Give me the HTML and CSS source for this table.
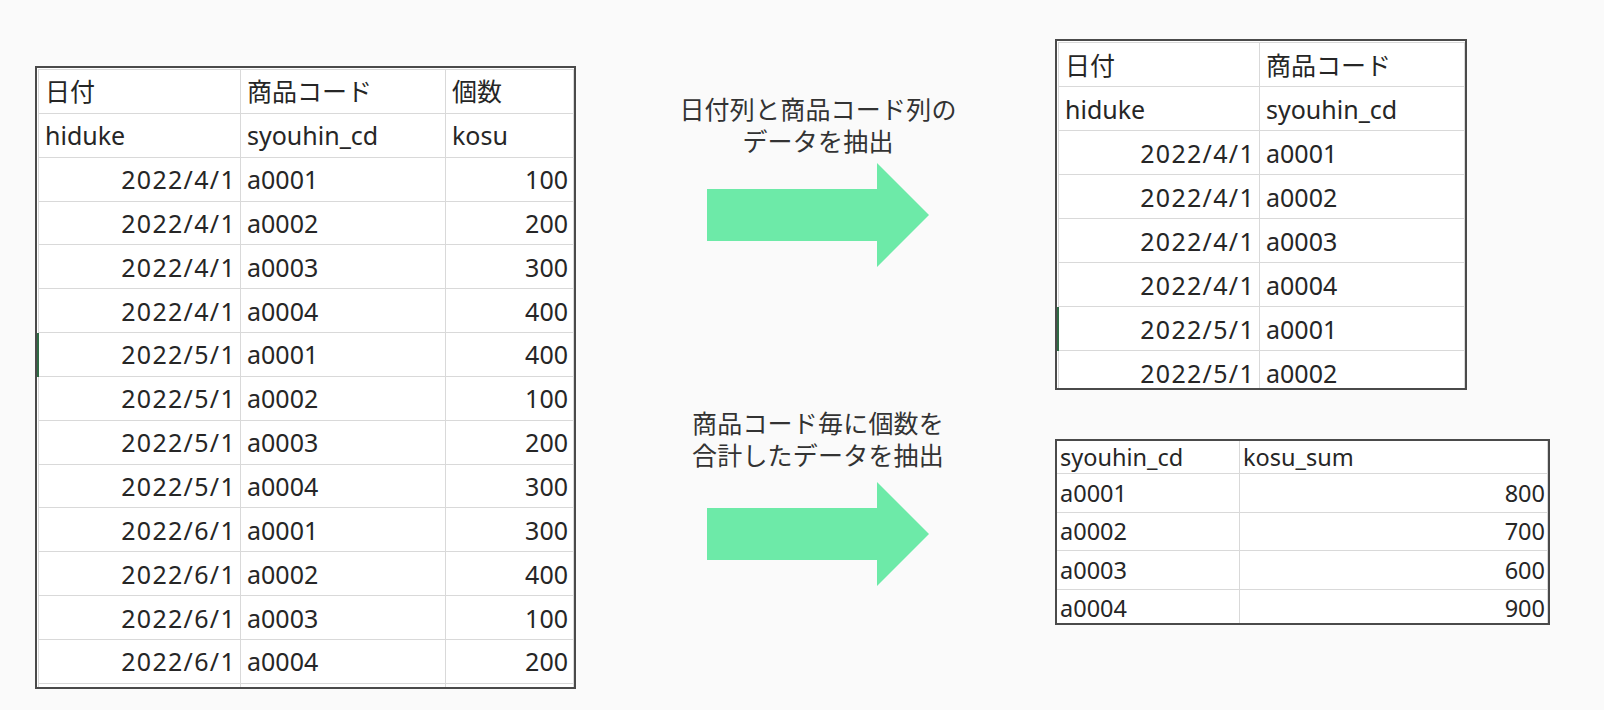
FILE: index.html
```html
<!DOCTYPE html>
<html lang="ja">
<head>
<meta charset="utf-8">
<title>抽出イメージ</title>
<link rel="stylesheet" href="styles.css">
</head>
<body>
<div class="page">
  <div class="sheet sheet-main">
    <div class="grid grid-3">
      <div class="c">日付</div><div class="c">商品コード</div><div class="c">個数</div>
      <div class="c">hiduke</div><div class="c">syouhin_cd</div><div class="c">kosu</div>
      <div class="c r d">2022/4/1</div><div class="c">a0001</div><div class="c r">100</div>
      <div class="c r d">2022/4/1</div><div class="c">a0002</div><div class="c r">200</div>
      <div class="c r d">2022/4/1</div><div class="c">a0003</div><div class="c r">300</div>
      <div class="c r d">2022/4/1</div><div class="c">a0004</div><div class="c r">400</div>
      <div class="c r d mark">2022/5/1</div><div class="c">a0001</div><div class="c r">400</div>
      <div class="c r d">2022/5/1</div><div class="c">a0002</div><div class="c r">100</div>
      <div class="c r d">2022/5/1</div><div class="c">a0003</div><div class="c r">200</div>
      <div class="c r d">2022/5/1</div><div class="c">a0004</div><div class="c r">300</div>
      <div class="c r d">2022/6/1</div><div class="c">a0001</div><div class="c r">300</div>
      <div class="c r d">2022/6/1</div><div class="c">a0002</div><div class="c r">400</div>
      <div class="c r d">2022/6/1</div><div class="c">a0003</div><div class="c r">100</div>
      <div class="c r d">2022/6/1</div><div class="c">a0004</div><div class="c r">200</div>
      <div class="c"></div><div class="c"></div><div class="c"></div>
    </div>
  </div>

  <div class="mid">
    <div class="step step-1">
      <p class="caption">日付列と商品コード列の<br>データを抽出</p>
      <svg class="arrow" width="222" height="104" viewBox="0 0 222 104" aria-hidden="true">
        <polygon points="0,26 170,26 170,0 222,52 170,104 170,78 0,78" fill="#6deaa8"/>
      </svg>
    </div>
    <div class="step step-2">
      <p class="caption">商品コード毎に個数を<br>合計したデータを抽出</p>
      <svg class="arrow" width="222" height="104" viewBox="0 0 222 104" aria-hidden="true">
        <polygon points="0,26 170,26 170,0 222,52 170,104 170,78 0,78" fill="#6deaa8"/>
      </svg>
    </div>
  </div>

  <div class="right">
    <div class="sheet sheet-top">
      <div class="grid grid-2">
        <div class="c">日付</div><div class="c">商品コード</div>
        <div class="c">hiduke</div><div class="c">syouhin_cd</div>
        <div class="c r d">2022/4/1</div><div class="c">a0001</div>
        <div class="c r d">2022/4/1</div><div class="c">a0002</div>
        <div class="c r d">2022/4/1</div><div class="c">a0003</div>
        <div class="c r d">2022/4/1</div><div class="c">a0004</div>
        <div class="c r d mark">2022/5/1</div><div class="c">a0001</div>
        <div class="c r d">2022/5/1</div><div class="c">a0002</div>
      </div>
    </div>

    <div class="sheet sheet-sum">
      <div class="grid grid-sum">
        <div class="s h">syouhin_cd</div><div class="s h">kosu_sum</div>
        <div class="s">a0001</div><div class="s r">800</div>
        <div class="s">a0002</div><div class="s r">700</div>
        <div class="s">a0003</div><div class="s r">600</div>
        <div class="s">a0004</div><div class="s r">900</div>
      </div>
    </div>
  </div>
</div>
</body>
</html>
```

FILE: styles.css
```css
html, body {
  margin: 0;
  padding: 0;
  background: #fafafa;
}

body {
  font-family: "Noto Sans", "Noto Sans CJK JP", sans-serif;
  color: #262626;
}

.page {
  display: flex;
  align-items: flex-start;
  padding-left: 35px;
}

/* ---------- sheets ---------- */
.sheet {
  background: #ffffff;
  border: 2px solid #4a4a4a;
  overflow: hidden;
  box-sizing: border-box;
}

.sheet-main {
  margin-top: 66px;
  height: 623px;
  padding: 1px 0 0 1px;
}

.sheet-top {
  height: 351px;
  padding: 1px 0 0 1px;
}

.sheet-sum {
  margin-top: 49px;
  height: 186px;
}

.grid {
  display: grid;
}

.grid-3 {
  grid-template-columns: 202px 205px 128px;
  border-left: 1px solid #d9d9d9;
  border-top: 1px solid #d9d9d9;
}

.grid-2 {
  grid-template-columns: 201px 205px;
  border-left: 1px solid #d9d9d9;
  border-top: 1px solid #d9d9d9;
}

.sheet-main .c {
  height: 43.85px;
}

.sheet-top .c {
  height: 44px;
}

.c {
  box-sizing: border-box;
  border-right: 1px solid #d9d9d9;
  border-bottom: 1px solid #d9d9d9;
  display: flex;
  align-items: center;
  padding: 0 5px 0 6px;
  font-size: 25px;
  line-height: 30px;
  white-space: nowrap;
  overflow: hidden;
}

.r {
  justify-content: flex-end;
}

.d {
  letter-spacing: 1.3px;
  padding-right: 4px;
}

.mark {
  box-shadow: -4px 0 0 0 #2f6b45;
}

/* ---------- sum table ---------- */
.grid-sum {
  grid-template-columns: 183px 308px;
}

.s {
  box-sizing: border-box;
  height: 38.5px;
  border-right: 1px solid #d9d9d9;
  border-bottom: 1px solid #d9d9d9;
  display: flex;
  align-items: center;
  padding: 0 2px 0 3px;
  font-size: 23.5px;
  line-height: 28px;
  white-space: nowrap;
}

.s.h {
  height: 33px;
}

/* ---------- middle column ---------- */
.mid {
  margin-left: 84px;
  width: 316px;
  display: flex;
  flex-direction: column;
}

.step-1 {
  margin-top: 91.5px;
}

.step-2 {
  margin-top: 139px;
}

.caption {
  margin: 0;
  font-family: "Noto Sans CJK JP", sans-serif;
  font-size: 25px;
  line-height: 32px;
  letter-spacing: 0.2px;
  color: #333333;
  text-align: center;
}

.arrow {
  display: block;
  margin-left: 47px;
}

.step-1 .arrow {
  margin-top: 7px;
}

.step-2 .arrow {
  margin-top: 12px;
}

/* ---------- right column ---------- */
.right {
  margin-left: 79px;
  margin-top: 39px;
  display: flex;
  flex-direction: column;
  align-items: flex-start;
}
```
